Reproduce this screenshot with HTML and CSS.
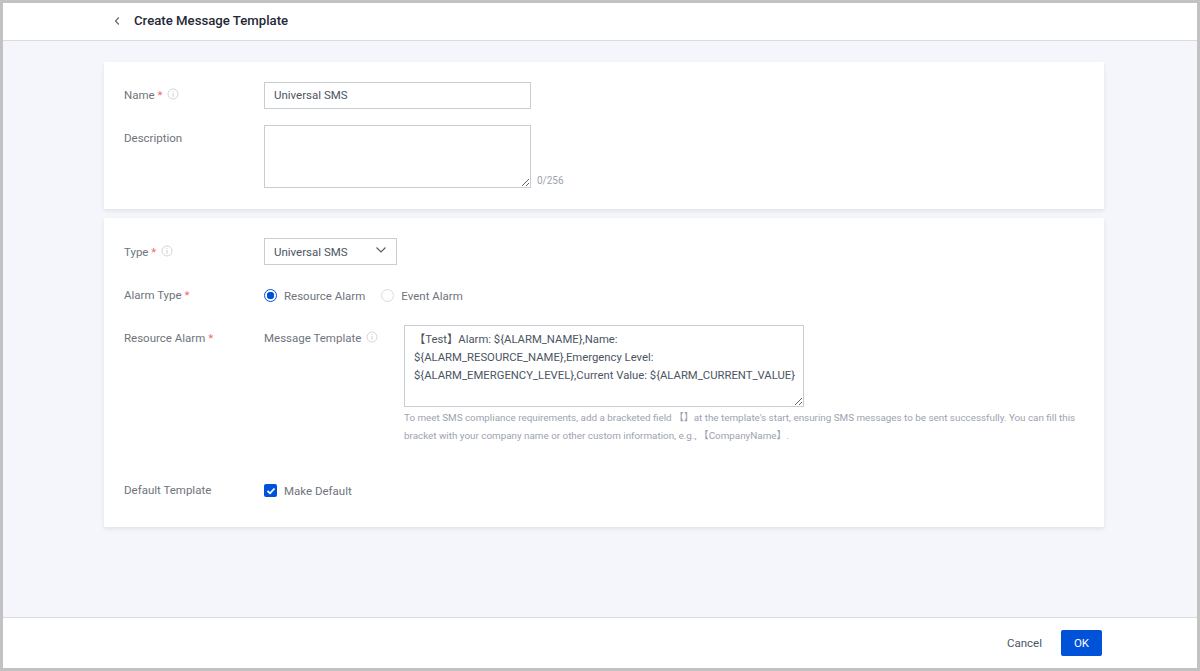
FILE: index.html
```html
<!DOCTYPE html>
<html lang="en">
<head>
<meta charset="utf-8">
<title>Create Message Template</title>
<link rel="stylesheet" href="styles.css">
</head>
<body>
<div class="frame">
  <header class="topbar">
    <svg class="back" width="6" height="10" viewBox="0 0 6 10"><path d="M4.800 1.500 1.500 5l3.300 3.500" fill="none" stroke="#5b6270" stroke-width="1.100"/></svg>
    <h1 class="title">Create Message Template</h1>
  </header>
  <main class="content">
    <section class="card card-basic">
      <div class="row row-name">
        <div class="label">Name <span class="req">*</span>
          <svg class="info" width="12" height="12" viewBox="0 0 12 12"><circle cx="6" cy="6" r="5" fill="none" stroke="#d3d5d9"/><path d="M6 5.200v3.600M6 3.200v1" stroke="#c9ccd1"/></svg>
        </div>
        <div class="input">Universal SMS</div>
      </div>
      <div class="row row-desc">
        <div class="label">Description</div>
        <textarea class="desc-area"></textarea>
        <span class="count">0/256</span>
      </div>
    </section>
    <section class="card card-config">
      <div class="row row-type">
        <div class="label">Type <span class="req">*</span>
          <svg class="info" width="12" height="12" viewBox="0 0 12 12"><circle cx="6" cy="6" r="5" fill="none" stroke="#d3d5d9"/><path d="M6 5.200v3.600M6 3.200v1" stroke="#c9ccd1"/></svg>
        </div>
        <div class="select">Universal SMS
          <svg class="chev" width="12" height="8" viewBox="0 0 12 8"><path d="M1.500 1.500 6 6l4.500-4.500" fill="none" stroke="#555b66" stroke-width="1.100"/></svg>
        </div>
      </div>
      <div class="row row-alarm">
        <div class="label">Alarm Type <span class="req">*</span></div>
        <div class="radios">
          <span class="radio on"></span><span class="opt">Resource Alarm</span>
          <span class="radio"></span><span class="opt">Event Alarm</span>
        </div>
      </div>
      <div class="row row-res">
        <div class="label">Resource Alarm <span class="req">*</span></div>
        <div class="sublabel">Message Template
          <svg class="info" width="12" height="12" viewBox="0 0 12 12"><circle cx="6" cy="6" r="5" fill="none" stroke="#d3d5d9"/><path d="M6 5.200v3.600M6 3.200v1" stroke="#c9ccd1"/></svg>
        </div>
        <div class="tpl">
          <textarea class="tpl-area">【Test】Alarm: ${ALARM_NAME},Name: ${ALARM_RESOURCE_NAME},Emergency Level: ${ALARM_EMERGENCY_LEVEL},Current Value: ${ALARM_CURRENT_VALUE}</textarea>
          <p class="hint">To meet SMS compliance requirements, add a bracketed field 【】at the template's start, ensuring SMS messages to be sent successfully. You can fill this<br>bracket with your company name or other custom information, e.g., 【CompanyName】.</p>
        </div>
      </div>
      <div class="row row-default">
        <div class="label">Default Template</div>
        <span class="check"><svg width="10" height="8" viewBox="0 0 10 8"><path d="M1.500 4 4 6.300 8.500 1.500" fill="none" stroke="#fff" stroke-width="1.800"/></svg></span>
        <span class="opt">Make Default</span>
      </div>
    </section>
  </main>
  <footer class="footer">
    <span class="cancel">Cancel</span>
    <span class="ok">OK</span>
  </footer>
</div>
</body>
</html>
```

FILE: styles.css
```css
* { box-sizing: border-box; }
html, body { margin: 0; height: 100%; }
body {
  font-family: Roboto, "Noto Sans CJK SC", sans-serif;
  font-size: 11.500px;
  color: #4b5563;
  overflow: hidden;
}
.frame {
  height: 671px;
  border: 3px solid #c2c2c2;
  display: flex;
  flex-direction: column;
  background: #f4f6fb;
}
.topbar {
  height: 38px;
  flex: none;
  background: #fff;
  border-bottom: 1px solid #d9dbe0;
  display: flex;
  align-items: center;
  padding: 0 0 2px 111px;
  gap: 14px;
}
.title { margin: 0; font-size: 13.200px; font-weight: 500; color: #1f2937; line-height: 18px; }
.content { flex: 1; padding: 21px 93px 0 101px; }
.card {
  background: #fff;
  box-shadow: 0 2px 4px rgba(54, 58, 80, .10);
  padding: 20px 20px 0;
}
.card-basic { height: 147px; margin-bottom: 9px; }
.card-config { height: 309px; }
.row { display: flex; }
.label { width: 140px; flex: none; color: #6f747c; line-height: 27px; }
.req { color: #f0686a; }
.info { vertical-align: -1px; margin-left: 2px; }
.input {
  width: 267px; height: 27px;
  border: 1px solid #c9ccd1;
  padding-left: 9px;
  line-height: 25px;
  color: #4b5563;
}
.row-desc { margin-top: 16px; align-items: flex-end; }
.row-desc .label { align-self: flex-start; }
textarea {
  display: block;
  border: 1px solid #c9ccd1;
  border-radius: 0;
  outline: none;
  margin: 0;
  font: inherit;
  color: #4b5563;
  background: #fff;
}
.desc-area { width: 267px; height: 63px; }
.count { font-size: 10px; color: #9ca3af; margin-left: 6px; line-height: 14px; }
.row-type .label { padding-top: 1px; }
.select {
  position: relative;
  width: 133px; height: 27px;
  border: 1px solid #c9ccd1;
  padding-left: 9px;
  line-height: 27px;
}
.chev { position: absolute; right: 9px; top: 7px; }
.row-alarm { margin-top: 16px; align-items: center; }
.radios { display: flex; align-items: center; }
.radio {
  width: 13px; height: 13px;
  border: 1px solid #d9dbe0;
  border-radius: 50%;
  margin-right: 7px;
  background: #fff;
}
.radio.on {
  border-color: #0052d9;
  background: radial-gradient(circle, #0052d9 0 3.500px, #fff 4px);
}
.radios .opt { margin-right: 16px; }
.opt { color: #6f747c; }
.row-res { margin-top: 16px; }
.sublabel { width: 140px; flex: none; color: #6f747c; line-height: 27px; }
.tpl-area {
  width: 400px; height: 82px;
  padding: 5px 4px 4px 9px;
  font-size: 11.300px;
  line-height: 18px;
}
.hint {
  margin: 2px 0 0;
  font-size: 9.850px;
  line-height: 18px;
  color: #9ca3af;
  white-space: nowrap;
}
.row-default { margin-top: 32px; align-items: center; }
.check {
  width: 13px; height: 13px;
  border-radius: 2px;
  background: #0052d9;
  display: flex; align-items: center; justify-content: center;
  margin-right: 7px;
}
.footer {
  height: 51px;
  flex: none;
  background: #fff;
  border-top: 1px solid #d9dbe0;
  display: flex;
  align-items: center;
  justify-content: flex-end;
  padding-right: 95px;
  gap: 19px;
}
.cancel { color: #4b5563; }
.ok {
  width: 41px; height: 26px;
  background: #0052d9;
  color: #fff;
  border-radius: 2px;
  text-align: center;
  line-height: 26px;
}
```
